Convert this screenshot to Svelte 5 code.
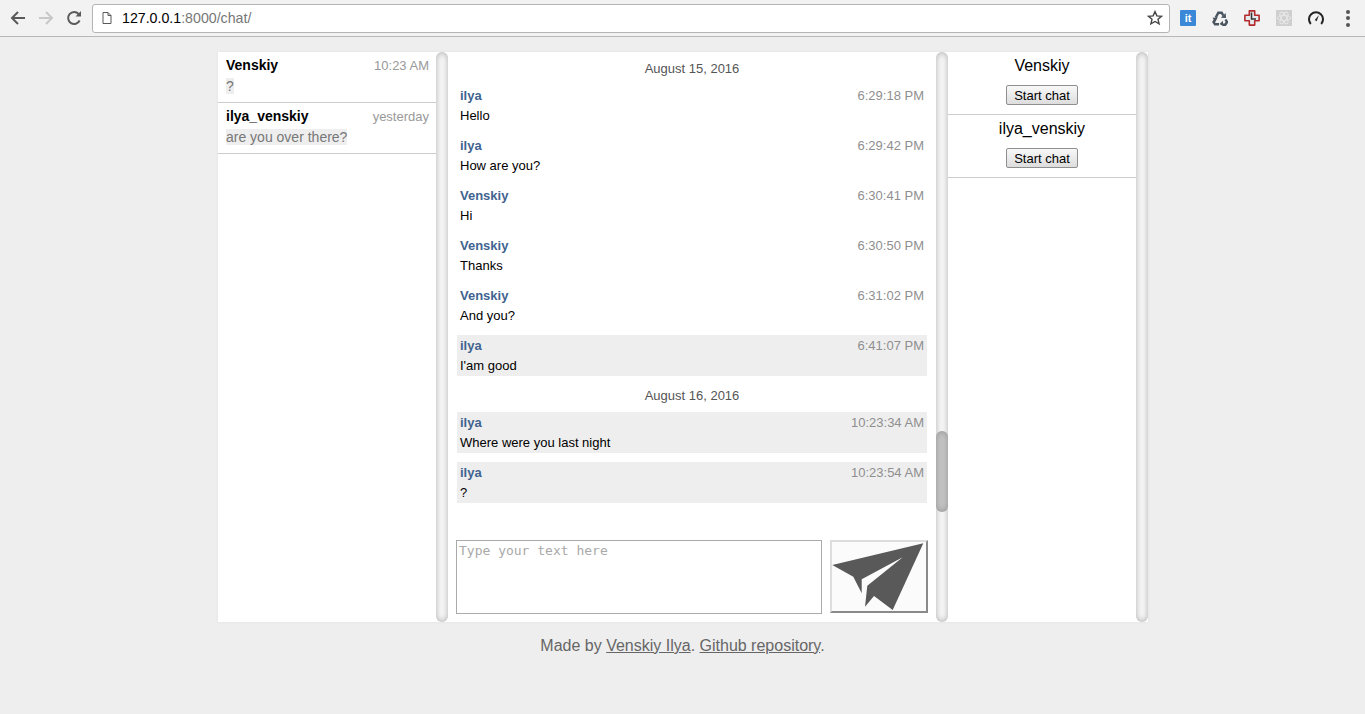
<script>
  const conversations = [
    { name: 'Venskiy', time: '10:23 AM', text: '?' },
    { name: 'ilya_venskiy', time: 'yesterday', text: 'are you over there?' }
  ];
  const thread = [
    { date: 'August 15, 2016' },
    { who: 'ilya', time: '6:29:18 PM', text: 'Hello' },
    { who: 'ilya', time: '6:29:42 PM', text: 'How are you?' },
    { who: 'Venskiy', time: '6:30:41 PM', text: 'Hi' },
    { who: 'Venskiy', time: '6:30:50 PM', text: 'Thanks' },
    { who: 'Venskiy', time: '6:31:02 PM', text: 'And you?' },
    { who: 'ilya', time: '6:41:07 PM', text: "I'am good", unread: true },
    { date: 'August 16, 2016' },
    { who: 'ilya', time: '10:23:34 AM', text: 'Where were you last night', unread: true },
    { who: 'ilya', time: '10:23:54 AM', text: '?', unread: true }
  ];
  const users = ['Venskiy', 'ilya_venskiy'];
</script>

<div class="toolbar">
  <svg class="nav" viewBox="0 0 18 18" width="18" height="18"><path d="M16 9H3M9 3 3 9l6 6" fill="none" stroke="#5a5a5a" stroke-width="2"/></svg>
  <svg class="nav" viewBox="0 0 18 18" width="18" height="18"><path d="M2 9h13M9 3l6 6-6 6" fill="none" stroke="#c8c8c8" stroke-width="2"/></svg>
  <svg class="nav" viewBox="0 0 18 18" width="18" height="18"><path d="M14.6 11.5A6 6 0 1 1 13.6 5" fill="none" stroke="#5a5a5a" stroke-width="2"/><path d="M10.5 7.5H16V2z" fill="#5a5a5a"/></svg>
  <div class="omnibox">
    <svg viewBox="0 0 12 14" width="12" height="14"><path d="M2 1.5h5l3 3v8H2zM7 1.5v3h3" fill="none" stroke="#5a5a5a" stroke-width="1"/></svg>
    <span class="url"><b>127.0.0.1</b>:8000/chat/</span>
    <svg class="star" viewBox="0 0 16 16" width="16" height="16"><path d="m8 1.6 1.9 4.300 4.600.4-3.500 3 1.100 4.600L8 11.500l-4.100 2.400L5 9.300l-3.500-3 4.600-.4z" fill="none" stroke="#444" stroke-width="1.400"/></svg>
  </div>
  <div class="exts">
    <span class="it">it</span>
    <svg viewBox="0 0 16 16" width="16" height="16"><g fill="none" stroke="#4a5560" stroke-width="2.400"><path d="M3.700 7.500 6.300 2.800H9.700L11.300 5.500"/><path d="M13.500 9.500 15 12 13.300 14.700H10.500"/><path d="M7 14.300H3L1.500 12 3 9.500"/></g><g fill="#4a5560"><path d="M8.800 7.700 14 7.900 13.700 3z"/><path d="M11 10.800V16L7.500 14z"/><path d="M.6 7.700 5.800 7.300 3.300 12z"/></g></svg>
    <svg viewBox="0 0 16 16" width="16" height="16"><path d="M5.300.9h5.400v4.400h4.400v5.400h-4.400v4.400H5.300v-4.400H.9V5.300h4.400z" fill="#e6e9ec" stroke="#b32a2c" stroke-width="1.600" stroke-linejoin="round"/><path d="M7.500 2.500v6.500h4.500" fill="none" stroke="#333" stroke-width="1.500"/></svg>
    <svg viewBox="0 0 16 16" width="16" height="16"><rect width="16" height="16" fill="#cfcfcf"/><g fill="none" stroke="#e8e8e8"><ellipse cx="8" cy="8" rx="6.500" ry="2.600"/><ellipse cx="8" cy="8" rx="6.500" ry="2.600" transform="rotate(60 8 8)"/><ellipse cx="8" cy="8" rx="6.500" ry="2.600" transform="rotate(120 8 8)"/></g></svg>
    <svg viewBox="0 0 16 16" width="16" height="16"><path d="M2.800 14A7 7 0 1 1 13.200 14" fill="none" stroke="#222" stroke-width="2"/><path d="m6.800 10 4.200-5-2.300 6.200z" fill="#222"/></svg>
  </div>
  <div class="dots"><i></i><i></i><i></i></div>
</div>

<main class="chat">
  <section class="panel left">
    <div class="content">
      {#each conversations as c}
        <div class="conv">
          <div class="conv-head"><strong>{c.name}</strong><span>{c.time}</span></div>
          <div class="conv-text"><mark>{c.text}</mark></div>
        </div>
      {/each}
    </div>
    <div class="track"></div>
  </section>

  <section class="panel center">
    <div class="content">
      <div class="messages">
        {#each thread as m}
          {#if m.date}
            <div class="date">{m.date}</div>
          {:else}
            <div class="msg" class:unread={m.unread}>
              <div class="msg-head"><strong>{m.who}</strong><span>{m.time}</span></div>
              <div class="msg-text">{m.text}</div>
            </div>
          {/if}
        {/each}
      </div>
      <form class="composer">
        <textarea placeholder="Type your text here"></textarea>
        <button class="send" type="button" aria-label="Send">
          <svg viewBox="0 0 94 69" width="94" height="69"><path d="M91.300 1.300.3 23 21.300 34.700 29.700 51.300V37.300L70.700 15.300 35.300 43.700 33 64.700 42 54 60.700 68z" fill="#595959"/></svg>
        </button>
      </form>
    </div>
    <div class="track"><div class="thumb"></div></div>
  </section>

  <section class="panel right">
    <div class="content">
      {#each users as u}
        <div class="user">
          <div class="user-name">{u}</div>
          <button type="button">Start chat</button>
        </div>
      {/each}
    </div>
    <div class="track"></div>
  </section>
</main>

<footer>Made by <a href="#a">Venskiy Ilya</a>. <a href="#b">Github repository</a>.</footer>

<style>
  :global(body) {
    margin: 0;
    background: #eeeeee;
    font-family: "Liberation Sans", Arial, sans-serif;
    height: 714px;
    overflow: hidden;
  }
  .toolbar {
    height: 36px;
    background: #f2f2f2;
    border-bottom: 1px solid #b8b8b8;
    display: flex;
    align-items: center;
    padding-left: 9px;
    box-sizing: content-box;
  }
  .nav { margin-right: 10px; flex: none; }
  .omnibox {
    width: 1068px;
    height: 27px;
    margin-left: -1px;
    background: #fff;
    border: 1px solid #b4b4b4;
    border-radius: 3px;
    display: flex;
    align-items: center;
    padding-left: 8px;
    box-sizing: content-box;
    flex: none;
  }
  .url {
    margin-left: 9px;
    font-size: 14.200px;
    color: #777;
    flex: 1;
  }
  .url b { font-weight: normal; color: #000; }
  .star { margin-right: 6px; }
  .exts {
    margin-left: 10px;
    display: flex;
    gap: 16px;
    align-items: center;
  }
  .it {
    width: 16px;
    height: 16px;
    background: #3b87d8;
    color: #fff;
    font-size: 11px;
    font-weight: bold;
    text-align: center;
    line-height: 16px;
    border-radius: 1px;
  }
  .dots {
    margin-left: 22px;
    display: flex;
    flex-direction: column;
    gap: 2.500px;
  }
  .dots i { width: 4px; height: 4px; border-radius: 50%; background: #555; display: block; }

  .chat {
    width: 930px;
    height: 570px;
    margin: 15px 0 0 218px;
    display: flex;
    background: #fff;
    box-shadow: 0 0 3px rgba(0,0,0,.06);
  }
  .panel { display: flex; height: 100%; }
  .content { flex: 1; min-width: 0; display: flex; flex-direction: column; }
  .track {
    width: 12px;
    flex: none;
    border-radius: 10px;
    background: #f7f7f7;
    box-shadow: inset 0 0 6px rgba(0,0,0,.3);
    overflow: hidden;
  }
  .thumb {
    margin-top: 379px;
    height: 81px;
    border-radius: 10px;
    background: #c4c4c4;
    box-shadow: inset 0 0 6px rgba(0,0,0,.25);
  }
  .left { width: 230px; }
  .center { width: 500px; }
  .right { width: 200px; }

  .conv {
    border-bottom: 1px solid #cccccc;
    padding: 3px 7px 0 8px;
    box-sizing: content-box;
    height: 47px;
  }
  .conv-head { display: flex; justify-content: space-between; align-items: baseline; line-height: 20px; }
  .conv-head strong { font-size: 14px; color: #000; }
  .conv-head span { font-size: 13px; color: #999; }
  .conv-text { font-size: 14px; line-height: 21px; color: #777; }
  mark { background: #eeeeee; color: #777; }

  .messages { padding: 6px 9px 0 9px; flex: 1; }
  .date { text-align: center; font-size: 13px; line-height: 18px; color: #555; padding-top: 2px; margin-bottom: 7px; }
  .msg {
    height: 41px;
    margin-bottom: 9px;
    padding: 0 3px;
    font-size: 13px;
  }
  .msg.unread { background: #eeeeee; }
  .msg-head { display: flex; justify-content: space-between; line-height: 21px; }
  .msg-head strong { color: #41638f; }
  .msg-head span { color: #8f8f8f; }
  .msg-text { line-height: 20px; color: #000; }

  .composer { display: flex; gap: 8px; padding: 0 0 8px 8px; }
  textarea {
    width: 366px;
    height: 74px;
    box-sizing: border-box;
    border: 1px solid #aaaaaa;
    padding: 2px;
    margin: 0;
    resize: none;
    font-family: "DejaVu Sans Mono", monospace;
    font-size: 13px;
    outline: none;
  }
  textarea::placeholder { color: #a9a9a9; opacity: 1; }
  .send {
    width: 98px;
    height: 73px;
    padding: 0;
    box-sizing: border-box;
    background: #fbfbfb;
    border: 2px solid;
    border-color: #dddddd #8a8a8a #8a8a8a #dddddd;
    display: block;
  }
  .send svg { display: block; }

  .user {
    height: 62px;
    border-bottom: 1px solid #cccccc;
    text-align: center;
  }
  .user-name { font-size: 16px; line-height: 18px; padding-top: 5px; color: #000; height: 29px; box-sizing: border-box; margin-bottom: 4px; }
  .user button {
    width: 72px;
    height: 20px;
    padding: 0;
    font-family: inherit;
    font-size: 13px;
    color: #000;
    background: linear-gradient(#f8f8f8, #dddddd);
    border: 1px solid #8f8f8f;
    border-radius: 2px;
  }

  footer {
    text-align: center;
    font-size: 16px;
    line-height: 18px;
    color: #666;
    margin-top: 15px;
  }
  footer a { color: #666; }
</style>
